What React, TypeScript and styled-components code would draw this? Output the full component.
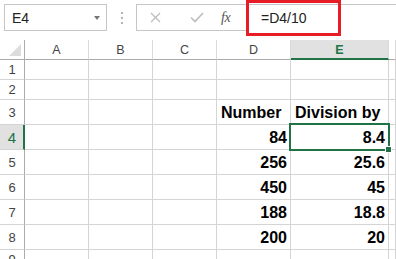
import React from "react";
import styled, { createGlobalStyle, css } from "styled-components";

const Global = createGlobalStyle`
  html, body { margin: 0; padding: 0; background: #fff; }
  body { font-family: "Liberation Sans", Arial, sans-serif; }
`;

const GREEN = "#217346";
const GRID = "#d4d4d4";
const HEAD_LINE = "#ababab";

const Wrap = styled.div`
  width: 396px;
  height: 259px;
  overflow: hidden;
  position: relative;
`;

const Toolbar = styled.div`
  display: flex;
  align-items: flex-start;
  height: 31px;
  padding-top: 4px;
  box-sizing: border-box;
`;

const NameBox = styled.div`
  margin-left: 4px;
  width: 103px;
  height: 27px;
  box-sizing: border-box;
  border: 1px solid #c6c6c6;
  display: flex;
  align-items: center;
  padding-left: 7px;
  padding-right: 6px;
  font-size: 14px;
  color: #222;
`;

const Arrow = styled.span`
  margin-left: auto;
  width: 0;
  height: 0;
  border-left: 3.5px solid transparent;
  border-right: 3.5px solid transparent;
  border-top: 4px solid #777;
`;

const Dots = styled.div`
  width: 29px;
  height: 27px;
  display: flex;
  flex-direction: column;
  align-items: center;
  justify-content: center;
  gap: 3px;
  span {
    width: 2px;
    height: 2px;
    background: #b4b4b4;
  }
`;

const FormulaArea = styled.div`
  flex: 1;
  display: flex;
  position: relative;
  border-top: 1px solid #c6c6c6;
  height: 27px;
  box-sizing: border-box;
`;

const FxButtons = styled.div`
  width: 110px;
  box-sizing: border-box;
  border-left: 1px solid #c6c6c6;
  border-bottom: 1px solid #c6c6c6;
  display: flex;
  align-items: center;
  padding-left: 13px;
`;

const IconSlot = styled.span<{ $w: number }>`
  width: ${(p) => p.$w}px;
  display: flex;
  align-items: center;
`;

const Fx = styled.span`
  font-family: "Liberation Serif", "Times New Roman", serif;
  font-style: italic;
  font-size: 14px;
  color: #555;
  letter-spacing: -0.5px;
`;

const FormulaText = styled.div`
  flex: 1;
  padding-left: 15px;
  display: flex;
  align-items: center;
  font-size: 14px;
  color: #222;
`;

const Highlight = styled.div`
  position: absolute;
  left: 110px;
  top: -5px;
  width: 95px;
  height: 36px;
  box-sizing: border-box;
  border: 3px solid #e81c24;
  pointer-events: none;
`;

const Sheet = styled.div`
  position: relative;
  margin-top: 9px;
  display: grid;
  grid-template-columns: 25px 64px 64px 64px 74px 98px 1fr;
  grid-template-rows: 20px 20px 20px 25px 25px 25px 25px 25px 25px 20px;
`;

const Corner = styled.div`
  border-right: 1px solid ${HEAD_LINE};
  border-bottom: 1px solid ${HEAD_LINE};
  position: relative;
  &::after {
    content: "";
    position: absolute;
    right: 3px;
    bottom: 3px;
    width: 0;
    height: 0;
    border-left: 12px solid transparent;
    border-bottom: 12px solid #dcdcdc;
  }
`;

const ColHead = styled.div<{ $sel?: boolean }>`
  display: flex;
  align-items: center;
  justify-content: center;
  font-size: 12.5px;
  color: #444;
  border-right: 1px solid #dadada;
  border-bottom: 1px solid ${HEAD_LINE};
  box-sizing: border-box;
  padding-top: 1px;
  ${(p) =>
    p.$sel &&
    css`
      background: #e1e1e1;
      color: ${GREEN};
      font-weight: bold;
      border-bottom: 2px solid ${GREEN};
      padding-top: 2px;
    `}
`;

const RowHead = styled.div<{ $sel?: boolean }>`
  display: flex;
  align-items: center;
  justify-content: center;
  font-size: 13px;
  color: #444;
  border-right: 1px solid ${HEAD_LINE};
  border-bottom: 1px solid ${GRID};
  box-sizing: border-box;
  ${(p) =>
    p.$sel &&
    css`
      background: #e1e1e1;
      color: ${GREEN};
      font-size: 15px;
      border-right: 2px solid ${GREEN};
      padding-left: 1px;
    `}
`;

const Cell = styled.div<{ $align?: "left" | "right" }>`
  display: flex;
  align-items: flex-end;
  justify-content: ${(p) => (p.$align === "right" ? "flex-end" : "flex-start")};
  padding: 0 ${(p) => (p.$align === "right" ? "3px" : "0")} 2px
    ${(p) => (p.$align === "left" ? "4px" : "0")};
  border-right: 1px solid ${GRID};
  border-bottom: 1px solid ${GRID};
  font-weight: bold;
  font-size: 16px;
  line-height: 18px;
  color: #000;
  white-space: nowrap;
  overflow: visible;
  box-sizing: border-box;
`;

const Selection = styled.div`
  position: absolute;
  left: 289px;
  top: 83px;
  width: 101px;
  height: 28px;
  box-sizing: border-box;
  border: 2px solid ${GREEN};
  pointer-events: none;
  &::after {
    content: "";
    position: absolute;
    right: -4px;
    bottom: -4px;
    width: 5px;
    height: 5px;
    background: ${GREEN};
    border: 1px solid #fff;
  }
`;

const CloseIcon = () => (
  <svg width="11" height="11" viewBox="0 0 11 11">
    <path d="M1 1L10 10M10 1L1 10" stroke="#bdbdbd" strokeWidth="1.3" fill="none" />
  </svg>
);

const CheckIcon = () => (
  <svg width="14" height="11" viewBox="0 0 14 11">
    <path d="M1 5.5L5 9.5L13 1" stroke="#bdbdbd" strokeWidth="1.6" fill="none" />
  </svg>
);

const cols = ["A", "B", "C", "D", "E"];
const rows: { d?: string; e?: string; header?: boolean }[] = [
  {},
  {},
  { d: "Number", e: "Division by", header: true },
  { d: "84", e: "8.4" },
  { d: "256", e: "25.6" },
  { d: "450", e: "45" },
  { d: "188", e: "18.8" },
  { d: "200", e: "20" },
  {},
];

export default function App() {
  return (
    <Wrap>
      <Global />
      <Toolbar>
        <NameBox>
          E4
          <Arrow />
        </NameBox>
        <Dots>
          <span />
          <span />
          <span />
        </Dots>
        <FormulaArea>
          <FxButtons>
            <IconSlot $w={40}>
              <CloseIcon />
            </IconSlot>
            <IconSlot $w={31}>
              <CheckIcon />
            </IconSlot>
            <Fx>fx</Fx>
          </FxButtons>
          <FormulaText>=D4/10</FormulaText>
          <Highlight />
        </FormulaArea>
      </Toolbar>
      <Sheet>
        <Corner />
        {cols.map((c) => (
          <ColHead key={c} $sel={c === "E"}>
            {c}
          </ColHead>
        ))}
        <ColHead />
        {rows.map((r, i) => (
          <React.Fragment key={i}>
            <RowHead $sel={i === 3}>{i + 1}</RowHead>
            <Cell />
            <Cell />
            <Cell />
            <Cell $align={r.header ? "left" : "right"}>{r.d}</Cell>
            <Cell $align={r.header ? "left" : "right"}>{r.e}</Cell>
            <Cell />
          </React.Fragment>
        ))}
        <Selection />
      </Sheet>
    </Wrap>
  );
}
